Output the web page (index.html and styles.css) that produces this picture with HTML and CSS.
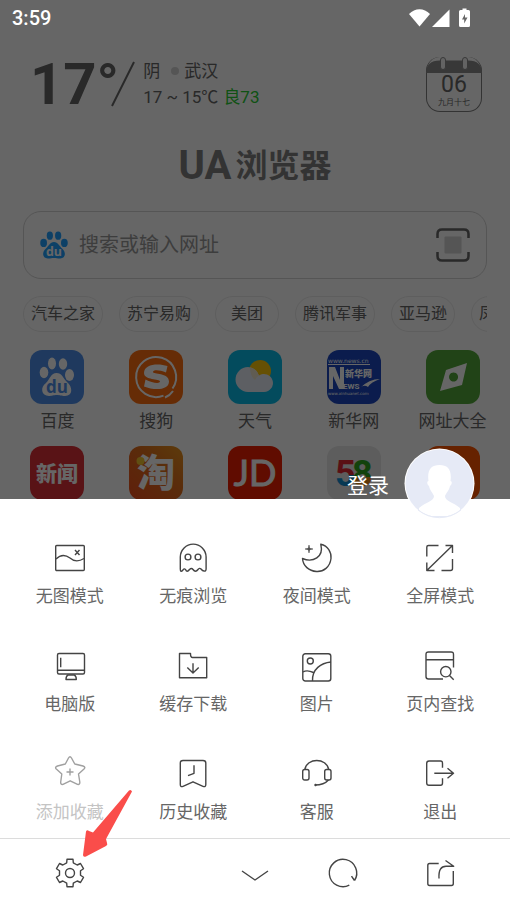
FILE: index.html
```html
<!DOCTYPE html>
<html lang="zh-CN">
<head>
  <meta charset="UTF-8">
  <meta name="viewport" content="width=device-width, initial-scale=1">
  <title>UA浏览器</title>
  <link rel="stylesheet" href="styles.css">
</head>
<body>
  <!-- Home page, dimmed behind the menu -->
  <main class="home">
    <div class="status-bar">
      <span class="status-time">3:59</span>
      <svg class="status-icons" width="62" height="20" viewBox="0 0 62 20" aria-hidden="true">
        <path d="M0 6 C6-.5 15-.5 21 6 L10.500 18.500Z"/>
        <path d="M23 19 L40.500 1.500 V19Z"/>
        <path fill-rule="evenodd" d="M53.500 0.500h4v1.500h2q1.500 0 1.500 1.500v14q0 1.500-1.500 1.500h-8q-1.500 0-1.500-1.500v-14q0-1.500 1.500-1.500h2z M56 6 L53 11.500h2.200v4L58.500 9.500h-2.500z"/>
      </svg>
    </div>

    <header class="top">
      <div class="weather">
        <span class="temperature">17°</span>
        <svg class="slash" width="24" height="46" viewBox="0 0 24 46" aria-hidden="true"><path d="M1 45 L23 1"/></svg>
        <div class="weather-info">
          <div class="weather-row"><span>阴</span><i class="dot"></i><span>武汉</span></div>
          <div class="weather-row"><span>17 ~ 15℃</span><span class="air">良73</span></div>
        </div>
      </div>
      <div class="calendar">
        <svg class="calendar-rings" width="56" height="16" viewBox="0 0 56 16" aria-hidden="true">
          <path d="M0 16 Q0 3.500 14 3.500 H42 Q56 3.500 56 16Z" fill="#8c8c8c"/>
          <g fill="#f8f8f8" stroke="#8c8c8c">
            <rect x="14.500" y="0.500" width="5" height="12" rx="2.500"/>
            <rect x="36.500" y="0.500" width="5" height="12" rx="2.500"/>
          </g>
        </svg>
        <span class="calendar-day">06</span>
        <span class="calendar-lunar">九月十七</span>
      </div>
    </header>

    <h1 class="brand"><span class="brand-latin">UA</span>浏览器</h1>

    <form class="search">
      <svg width="28" height="30" viewBox="0 0 54 54" aria-hidden="true">
        <g fill="#21a0ff">
          <ellipse cx="7" cy="23" rx="6.500" ry="8"/>
          <ellipse cx="19" cy="9" rx="6" ry="8"/>
          <ellipse cx="35" cy="9" rx="6" ry="8"/>
          <ellipse cx="47" cy="23" rx="6.500" ry="8"/>
          <path d="M27 21 C35 21 37 29 43 34 C51 41 49 53 39 53 C33 53 32 52 27 52 C22 52 21 53 15 53 C5 53 3 41 11 34 C17 29 19 21 27 21Z"/>
        </g>
        <text class="paw-text" x="27" y="49" fill="#ffffff" font-size="24">du</text>
      </svg>
      <input class="search-input" type="text" placeholder="搜索或输入网址" aria-label="搜索或输入网址">
      <button class="scan" type="button" aria-label="扫一扫">
        <svg width="34" height="34" viewBox="0 0 34 34">
          <path d="M1.500 10 V6 Q1.500 1.500 6 1.500 H28 Q32.500 1.500 32.500 6 V10 M1.500 24 V28 Q1.500 32.500 6 32.500 H28 Q32.500 32.500 32.500 28 V24" fill="none" stroke="#666" stroke-width="2.500"/>
          <rect x="8.500" y="8.500" width="17" height="17" rx="1" fill="#d4d4d4"/>
        </svg>
      </button>
    </form>

    <nav class="chips">
      <a class="chip" href="#">汽车之家</a>
      <a class="chip" href="#">苏宁易购</a>
      <a class="chip" href="#">美团</a>
      <a class="chip" href="#">腾讯军事</a>
      <a class="chip" href="#">亚马逊</a>
      <a class="chip" href="#">凤凰网</a>
    </nav>

    <nav class="sites">
      <a class="site" href="#">
        <svg class="site-icon blue" viewBox="0 0 54 54" aria-hidden="true">
          <g fill="#fff">
            <ellipse cx="14" cy="22.500" rx="4.300" ry="5.800"/>
            <ellipse cx="22" cy="13.500" rx="4" ry="6"/>
            <ellipse cx="33" cy="14" rx="4.200" ry="5.800"/>
            <ellipse cx="39.500" cy="25" rx="4.500" ry="6"/>
            <path d="M26.500 23 C32 23 33 28 37 32 C43 37 43 46 35 46 C31 46 30 45 27 45 C23 45 22 46 19 46 C11 46 10 37 16 33 C20 29 21 23 26.500 23Z"/>
          </g>
          <text class="paw-text" x="27" y="42.500" fill="#4f90ea" font-size="17">du</text>
        </svg>
        <span>百度</span>
      </a>
      <a class="site" href="#">
        <svg class="site-icon orange" viewBox="0 0 54 54" aria-hidden="true">
          <path d="M34.500 45.600 A20 20 0 1 1 43.500 38.500 M36 47.500 Q41 45.500 44 41" fill="none" stroke="#fff" stroke-width="2"/>
          <path d="M38.500 16 L37 22.500 C31 20 24 19.500 24 22 C24 24.500 40 22.500 40 31.500 C40 40.500 25 40.500 15 36.500 L16.500 29.500 C23 33 31 34 31 31.500 C31 28.500 15 30.500 15 23 C15 14 29 13 38.500 16Z" fill="#fff"/>
        </svg>
        <span>搜狗</span>
      </a>
      <a class="site" href="#">
        <svg class="site-icon cyan" viewBox="0 0 54 54" aria-hidden="true">
          <circle cx="32" cy="21" r="11" fill="#ffc70a"/>
          <path d="M20 17 A12 12 0 0 1 31 25.500 A9 9 0 1 1 36 42 H20 A12.500 12.500 0 0 1 20 17Z" fill="#e9eef7"/>
          <path d="M22 17.300 A12 12 0 0 1 31 25.500 Q28 27 27 30 Q22 26 22 17.300Z" fill="#efe6cc"/>
        </svg>
        <span>天气</span>
      </a>
      <a class="site" href="#">
        <svg class="site-icon navy" viewBox="0 0 54 54" aria-hidden="true">
          <g fill="#fff">
            <text class="wide-logo" x="1" y="13" font-size="6">www.news.cn</text>
            <rect x="1" y="14" width="42" height="1"/>
            <path d="M2 17h6l5 13V17h4v22h-5L6 26v13H2z"/>
            <text class="cjk-logo" x="18" y="27" font-size="9">新华网</text>
            <text class="latin-logo" x="16" y="39" font-size="8">EWS</text>
            <path d="M33 38 Q42 29 53 29 Q44 32 41 37 Q37 34 33 38Z"/>
            <text class="wide-logo" x="1" y="45" font-size="4">www.xinhuanet.com</text>
          </g>
        </svg>
        <span>新华网</span>
      </a>
      <a class="site" href="#">
        <svg class="site-icon green" viewBox="0 0 54 54" aria-hidden="true">
          <path fill-rule="evenodd" d="M41 13 L36 35 L14 41 L20 20Z M27.500 22.500a4.500 4.500 0 1 0 .1 0z" fill="#fff"/>
        </svg>
        <span>网址大全</span>
      </a>
      <a class="site" href="#" aria-label="新闻">
        <svg class="site-icon red" viewBox="0 0 54 54">
          <text class="cjk-logo" x="27" y="35" fill="#fff" font-size="21" text-anchor="middle">新闻</text>
        </svg>
      </a>
      <a class="site" href="#" aria-label="淘宝">
        <svg class="site-icon taobao" viewBox="0 0 54 54">
          <text class="cjk-logo" x="27" y="40" fill="#fff" font-size="38" text-anchor="middle">淘</text>
          <circle cx="11.500" cy="15" r="4" fill="#f2c52e"/>
        </svg>
      </a>
      <a class="site" href="#" aria-label="京东">
        <svg class="site-icon jd" viewBox="0 0 54 54">
          <text class="jd-logo" x="27" y="40" fill="#fff" font-size="36" text-anchor="middle">JD</text>
        </svg>
      </a>
      <a class="site" href="#" aria-label="58同城">
        <svg class="site-icon pale" viewBox="0 0 54 54">
          <defs>
            <linearGradient id="five" x2="0" y2="1"><stop offset=".52" stop-color="#e22a32"/><stop offset=".52" stop-color="#158fd0"/></linearGradient>
            <linearGradient id="eight" x2="0" y2="1"><stop offset=".58" stop-color="#2fa51c"/><stop offset=".58" stop-color="#e98a18"/></linearGradient>
          </defs>
          <text class="latin-logo" x="8" y="40" font-size="36" fill="url(#five)">5</text>
          <text class="latin-logo" x="25" y="40" font-size="36" fill="url(#eight)">8</text>
        </svg>
      </a>
      <a class="site" href="#" aria-label="更多">
        <svg class="site-icon rust" viewBox="0 0 54 54"></svg>
      </a>
    </nav>
  </main>

  <!-- Menu sheet -->
  <section class="sheet">
    <a class="login" href="#">
      <span>登录</span>
      <svg width="71" height="71" viewBox="0 0 71 71" aria-hidden="true">
        <defs><clipPath id="face"><circle cx="35.500" cy="35.500" r="33.500"/></clipPath></defs>
        <circle cx="35.500" cy="35.500" r="35" fill="#fff"/>
        <circle cx="35.500" cy="35.500" r="34" fill="#e6eaf6"/>
        <g clip-path="url(#face)">
          <path d="M25 38 C22.500 36 23 33 24.500 33 C23 22 27 17 35.500 17 C44 17 48 22 46.500 33 C48 33 48.500 36 46 38 C45 43 42 45 41 48 C41 53 49 54 56 60 V68 H15 V60 C22 54 30 53 30 48 C29 45 26 43 25 38Z" fill="#fff"/>
        </g>
        <path d="M14 62 A34 34 0 0 0 57 62" fill="none" stroke="#e6eaf6" stroke-width="1"/>
      </svg>
    </a>

    <div class="menu">
      <button class="menu-item" type="button">
        <svg class="icon" viewBox="0 0 32 32"><rect x="1.700" y="3.500" width="28.600" height="25" rx="1"/><path d="M2 17 C7 12 12 13 16 16 C21 20.500 26 19 30 16.500 M21 8 L25.500 13 M25.500 8 L21 13"/></svg>
        <span>无图模式</span>
      </button>
      <button class="menu-item" type="button">
        <svg class="icon" viewBox="0 0 32 32"><path d="M3.300 15 A12.900 12.900 0 0 1 29.100 15 V27 Q29 29.500 27 29 Q25.500 29 24 27 Q22.500 25.500 21 27.500 Q18.500 31 16 27.500 Q14.500 25.500 12.500 27.500 Q10 31 8.500 27.500 Q7 26 6 28 Q3.300 31 3.300 27Z"/><circle cx="11" cy="15" r="2.900"/><circle cx="21" cy="15" r="2.900"/></svg>
        <span>无痕浏览</span>
      </button>
      <button class="menu-item" type="button">
        <svg class="icon" viewBox="0 0 32 32"><path d="M19.800 2.300 C27 4 30.500 10 30 16.500 C29 25 22.500 30 15.500 29.500 C8 29 2 24 1.500 16.500 C12 21 23 15 19.800 2.300Z"/><path d="M8 3 L8.700 6.300 L12 7 L8.700 7.700 L8 11 L7.300 7.700 L4 7 L7.300 6.300Z" class="solid"/></svg>
        <span>夜间模式</span>
      </button>
      <button class="menu-item" type="button">
        <svg class="icon" viewBox="0 0 32 32"><path d="M2.800 14.500 V5 Q2.800 3.500 4.500 3.500 H14.500 M21.500 3.500 H28.500 V11 M28.500 3.500 L2.800 28.500 M2.800 20.500 V28.500 H10.500 M17.500 28.500 H26.500 Q28.500 28.500 28.500 26.500 V17"/></svg>
        <span>全屏模式</span>
      </button>
      <button class="menu-item" type="button">
        <svg class="icon" viewBox="0 0 32 32"><rect x="3.500" y="3.500" width="27" height="20.500" rx="1.500"/><path d="M3.500 20.300 H30.500 M6.700 7.700 V17.300 M14 25 Q12 26 12 29.500 H22.300 Q22.300 26 20.300 25Z"/></svg>
        <span>电脑版</span>
      </button>
      <button class="menu-item" type="button">
        <svg class="icon" viewBox="0 0 32 32"><path d="M2.500 3.500 H13.500 Q13.500 7.500 15.500 7.500 H29.700 V27.700 H2.500Z M16 13.300 V22.700 M10.300 17.500 L16 22.900 L21.700 17.500"/></svg>
        <span>缓存下载</span>
      </button>
      <button class="menu-item" type="button">
        <svg class="icon" viewBox="0 0 32 32"><rect x="1.800" y="3.700" width="28" height="27.300" rx="2.500"/><circle cx="9.300" cy="11" r="3"/><path d="M30 12 C20 13 11 19 11.500 31 M2 22 Q6 19.500 12.500 22.500"/></svg>
        <span>图片</span>
      </button>
      <button class="menu-item" type="button">
        <svg class="icon" viewBox="0 0 32 32"><path d="M29.500 17.500 V4.500 Q29.500 2 27 2 H4.500 Q2 2 2 4.500 V26.500 Q2 29 4.500 29 H19 M2 9.700 H29.500 M25.500 25.500 L29.700 29.700"/><circle cx="21.800" cy="21.700" r="5.200"/></svg>
        <span>页内查找</span>
      </button>
      <button class="menu-item" type="button" disabled>
        <svg class="icon" viewBox="0 0 32 32"><path d="M14.500 0 Q16-2.500 17.500 0 L20.800 6 L29 8 Q32 9 30 11 L24.500 16 L25.800 24 Q26 27 23.500 26.300 L16.200 22.800 L9 26.300 Q6.500 27 6.700 24 L7.800 16 L2.300 11 Q0.500 9 3.500 8 L11.300 6Z M16 10.500 V17.500 M12.500 14 H19.500"/></svg>
        <span>添加收藏</span>
      </button>
      <button class="menu-item" type="button">
        <svg class="icon" viewBox="0 0 32 32"><path d="M3.300 5 Q3.300 2.500 6 2.500 H26 Q28.800 2.500 28.800 5 V26.500 Q28.800 29.500 26 28.300 L16 23.800 L6 28.300 Q3.300 29.500 3.300 26.500Z M17 7.300 V15.300 L11 17.700"/></svg>
        <span>历史收藏</span>
      </button>
      <button class="menu-item" type="button">
        <svg class="icon" viewBox="0 0 32 32"><rect x="1.700" y="11.500" width="6.300" height="10.500" rx="2"/><rect x="23.700" y="11.500" width="6.300" height="10.500" rx="2"/><path d="M3.800 11.500 C6-.5 25.500-.5 27.700 11.500 M27.500 22 Q23 27 14 27"/><circle cx="14.500" cy="27" r="1" class="solid"/></svg>
        <span>客服</span>
      </button>
      <button class="menu-item" type="button">
        <svg class="icon" viewBox="0 0 32 32"><path d="M18.500 9.700 V5.500 Q18.500 3 16.500 3 H5 Q2.700 3 2.700 5.500 V25 Q2.700 27.300 5 27.300 H16.500 Q18.500 27.300 18.500 25 V20.300 M10.300 15.300 H29.500 M23.500 10.300 L29.500 15.300 L23.500 20.300"/></svg>
        <span>退出</span>
      </button>
    </div>

    <nav class="toolbar">
      <button class="tool tool-settings" type="button" aria-label="设置">
        <svg class="icon" viewBox="0 0 32 32"><path d="M12.700 5.800 L13 2.200 H19 L19.300 5.800 L23.200 8 L26.500 6.500 L29.500 11.700 L26.500 13.800 V18.200 L29.500 20.300 L26.500 25.500 L23.200 24 L19.300 26.200 L19 29.800 H13 L12.700 26.200 L8.800 24 L5.500 25.500 L2.500 20.300 L5.500 18.200 V13.800 L2.500 11.700 L5.500 6.500 L8.800 8Z"/><circle cx="16" cy="16" r="4.500"/></svg>
      </button>
      <button class="tool tool-close" type="button" aria-label="收起">
        <svg class="icon" viewBox="0 0 32 32"><path d="M3 14 L16 23 L29 14"/></svg>
      </button>
      <button class="tool" type="button" aria-label="刷新">
        <svg class="icon" viewBox="0 0 32 32"><path d="M22.300 28.200 A13.700 13.700 0 1 1 27.500 23.500 M24.500 19.200 L27.500 23.500"/></svg>
      </button>
      <button class="tool" type="button" aria-label="分享">
        <svg class="icon" viewBox="0 0 32 32"><path d="M13.700 6.500 H4.500 Q2.800 6.500 2.800 8.500 V26.500 Q2.800 28.500 4.500 28.500 H26.500 Q28.300 28.500 28.300 26.500 V14 M14 21.500 C13.500 13 16 9.300 21 9.300 H28.700 L20.500 3.500"/></svg>
      </button>

      <svg class="pointer" width="52" height="70" viewBox="0 0 52 70" aria-hidden="true">
        <path d="M47 1.500 Q49 0 50 2.500 L24 50 L25 54 Q26 56 24 57 L4 67.500 Q1 68.500 1 66 L4 42.500 Q5 40.500 7 42 L11 43.500Z"/>
      </svg>
    </nav>
  </section>
</body>
</html>
```
FILE: styles.css
```css
*,
*::before,
*::after {
  box-sizing: border-box;
}

:root {
  --text: #666666;
  --muted: #808080;
  --placeholder: #999999;
  --line: #d4d4d4;
  --icon: #444444;
  --arrow: #fa4d4a;
}

body {
  margin: 0;
  min-height: 100vh;
  display: flex;
  flex-direction: column;
  font-family: Roboto, "Noto Sans CJK SC", sans-serif;
  font-size: 17px;
  color: var(--text);
  background: #ffffff;
}

button,
input {
  font-family: inherit;
  font-size: inherit;
  color: inherit;
  margin: 0;
  padding: 0;
  border: none;
  background: none;
}

button {
  cursor: pointer;
}

a {
  color: inherit;
  text-decoration: none;
}

svg {
  display: block;
  flex: none;
}

/* Home */
.home {
  position: relative;
  flex: 1 1 0;
  min-height: 0;
  overflow: hidden;
}

.home::after {
  content: "";
  position: absolute;
  inset: 0;
  background: rgba(0, 0, 0, 0.6);
}

.status-bar {
  position: relative;
  z-index: 1;
  display: flex;
  align-items: center;
  justify-content: space-between;
  height: 36px;
  padding: 0 39px 0 12px;
  color: #ffffff;
}

.status-time {
  font-size: 20px;
  font-weight: 500;
}

.status-icons {
  fill: #ffffff;
}

.top {
  display: flex;
  align-items: center;
  justify-content: space-between;
  padding: 20px 28px 0 30px;
}

.weather {
  display: flex;
  align-items: center;
}

.temperature {
  font-size: 58px;
  line-height: 56px;
  font-weight: 700;
}

.slash {
  margin: 0 8px 0 -8px;
  stroke: var(--text);
  stroke-width: 2;
}

.weather-info {
  line-height: 26px;
}

.weather-row {
  display: flex;
  align-items: center;
  gap: 5px;
}

.dot {
  width: 8px;
  height: 8px;
  margin-left: 6px;
  border-radius: 50%;
  background: var(--line);
}

.air {
  color: #29cc33;
}

.calendar {
  display: flex;
  flex-direction: column;
  align-items: center;
  width: 56px;
  height: 55px;
  border: 1px solid var(--muted);
  border-top: none;
  border-radius: 14px;
}

.calendar-day {
  font-size: 23px;
  line-height: 24px;
}

.calendar-lunar {
  font-size: 8px;
  line-height: 12px;
}

.brand {
  display: flex;
  align-items: center;
  justify-content: center;
  gap: 4px;
  margin: 32px 0 23px;
  font-size: 32px;
  line-height: 44px;
  font-weight: 700;
  color: var(--muted);
}

.brand-latin {
  font-size: 40px;
}

.search {
  display: flex;
  align-items: center;
  height: 68px;
  margin: 0 23px;
  padding: 0 16px;
  border: 1px solid var(--line);
  border-radius: 18px;
}

.search-input {
  flex: 1;
  min-width: 0;
  margin-left: 11px;
  font-size: 20px;
  outline: none;
}

.search-input::placeholder {
  color: var(--placeholder);
}

.chips {
  display: flex;
  gap: 16px;
  margin: 17px 23px 18px;
  overflow: hidden;
}

.chip {
  flex: none;
  min-width: 64px;
  padding: 0 7px;
  border: 1px solid #ebebeb;
  border-radius: 18px;
  font-size: 16px;
  line-height: 34px;
  text-align: center;
}

.sites {
  display: grid;
  grid-template-columns: repeat(5, 1fr);
  row-gap: 13px;
  padding: 0 8px;
}

.site {
  display: flex;
  flex-direction: column;
  align-items: center;
  gap: 5px;
  line-height: 24px;
  white-space: nowrap;
}

.site-icon {
  width: 54px;
  height: 54px;
  border-radius: 12px;
}

.blue { background: #4f90ea; }
.orange { background: #ff6f0f; }
.cyan { background: #08bbe8; }
.navy { background: #1c48c0; }
.green { background: #54a93a; }
.red { background: #df3038; }
.taobao { background: linear-gradient(45deg, #f04e1c, #e0701c 60%, #e8951c); }
.jd { background: #f02000; }
.pale { background: #e8e8e8; }
.rust { background: #ff5500; }

.paw-text {
  font-family: "Open Sans", sans-serif;
  font-weight: 700;
  text-anchor: middle;
}

.cjk-logo {
  font-family: "Noto Sans CJK SC", sans-serif;
  font-weight: 900;
}

.latin-logo {
  font-family: Roboto, sans-serif;
  font-weight: 700;
}

.wide-logo {
  font-family: "DejaVu Sans", sans-serif;
}

.jd-logo {
  font-family: Lato, sans-serif;
  stroke: #ffffff;
  stroke-width: 1;
}

/* Menu sheet */
.sheet {
  position: relative;
  flex: none;
  background: #ffffff;
}

.login {
  position: absolute;
  right: 35px;
  bottom: 100%;
  display: flex;
  align-items: center;
  gap: 15px;
  margin-bottom: -20px;
  font-size: 21px;
  color: #ffffff;
}

.menu {
  display: grid;
  grid-template-columns: repeat(4, 1fr);
  row-gap: 40px;
  padding: 43px 8px 12px;
}

.menu-item {
  display: flex;
  flex-direction: column;
  align-items: center;
  gap: 8px;
  line-height: 28px;
}

.menu-item:disabled {
  color: #c4c4c4;
  cursor: default;
}

.icon {
  width: 32px;
  height: 32px;
  overflow: visible;
  fill: none;
  stroke: var(--icon);
  stroke-width: 1.4;
  stroke-linejoin: round;
}

.menu-item:disabled .icon {
  stroke: #a0a0a0;
}

.icon .solid {
  fill: var(--icon);
  stroke-width: 0.5;
}

/* Bottom toolbar */
.toolbar {
  position: relative;
  display: grid;
  grid-template-columns: 1fr 88px 88px 88px 1fr;
  padding: 0 16px;
  border-top: 1px solid #dcdcdc;
}

.tool {
  display: flex;
  align-items: center;
  justify-content: center;
  height: 68px;
}

.tool-close {
  grid-column: 3;
}

.pointer {
  position: absolute;
  left: 82px;
  bottom: 48px;
  fill: var(--arrow);
  pointer-events: none;
}
```
